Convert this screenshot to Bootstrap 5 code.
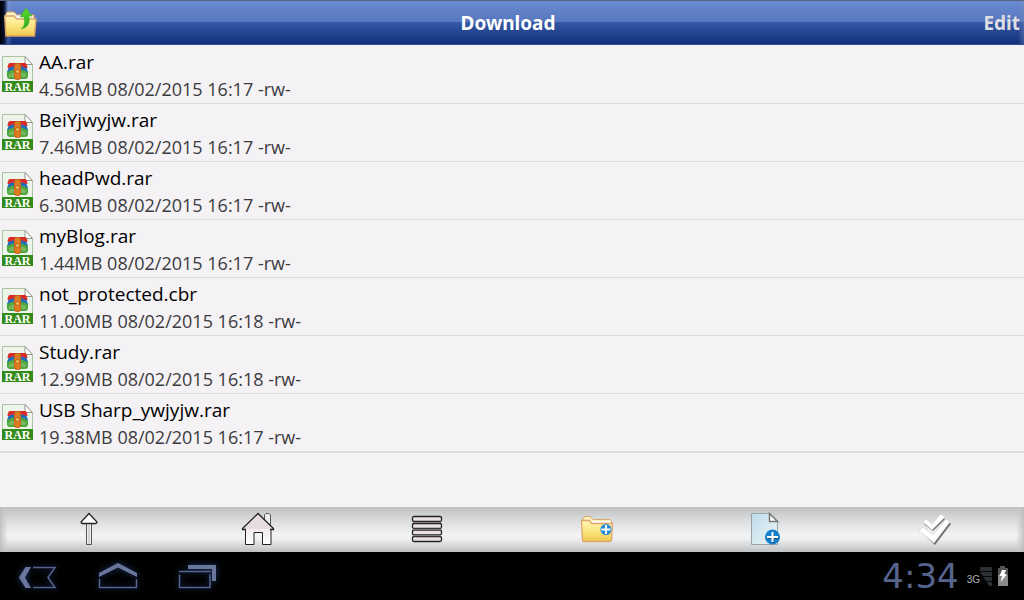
<!DOCTYPE html>
<html lang="en">
<head>
<meta charset="utf-8">
<meta name="viewport" content="width=device-width, initial-scale=1">
<title>Download</title>
<link rel="stylesheet" href="https://cdn.jsdelivr.net/npm/bootstrap@5.3.0/dist/css/bootstrap.min.css">
<style>
body { font-family: "Open Sans", "Noto Sans", sans-serif; background: #f4f2f5; color: #000; }
svg { display: block; flex: none; }
button { border: 0; background: none; padding: 0; }
.titlebar { height: 45px; border-top: 1px solid #53647f; border-bottom: 1px solid #2b5098;
  background: linear-gradient(90deg, #000 0, #06112b 4px, #8ba2d455 8px, transparent 12px, transparent calc(100% - 6px), #7890c066 100%),
  linear-gradient(#6a8ad2, #5676bd 49%, #3559a6 50%, #102f79); }
.titlebar h1, .edit-btn { font-family: "Noto Sans", sans-serif; font-size: 19px; line-height: 26px; font-weight: 700; }
.titlebar h1 { color: #fff; }
.edit-btn { color: #dedee2; }
.side { flex: 1 1 0; }
.file-list { padding-top: 1px; }
.file-row { height: 58px; padding-left: 2px; gap: 5px; border-bottom: 1px solid #dcdadd; color: #000; }
.file-row:last-child { height: 59px; border-bottom-width: 2px; }
.file-row svg { margin-top: 9px; }
.file-text { padding-top: 2px; }
.file-name { font-size: 19px; line-height: 28px; }
.file-meta { font-size: 18px; line-height: 27px; color: #3c3b3d; }
.toolbar { height: 45px; padding-bottom: 2px; background: linear-gradient(90deg, #b9b9bbcc 0, #c6c6c888 4px, transparent 8px, transparent calc(100% - 8px), #c6c6c888 calc(100% - 4px), #b9b9bbcc 100%),
  linear-gradient(#c0c1c3, #d9dadb 28%, #f3f4f5 62%, #eceeef 72%, #bfc0c1); }
.sysbar { height: 48px; background: #000; }
.sysbar button svg { filter: drop-shadow(0 0 3px #20376c); }
.clock { font-family: "DejaVu Sans", sans-serif; font-size: 34px; line-height: 40px; color: #56648c; }
.net-label { font-family: "Liberation Sans", sans-serif; font-size: 10px; line-height: 12px; color: #b0b0b0; }
</style>
</head>
<body>
<svg width="0" height="0" class="position-absolute" aria-hidden="true">
  <defs>
    <linearGradient id="gold" x2="0" y2="1"><stop stop-color="#fff6b5"/><stop offset=".55" stop-color="#fae37a"/><stop offset="1" stop-color="#efc851"/></linearGradient>
    <linearGradient id="leaf" x2="1" y2="1"><stop stop-color="#bcdcea"/><stop offset="1" stop-color="#f0f5f7"/></linearGradient>
    <linearGradient id="pale" x2="0" y2="1"><stop stop-color="#e6dadd"/><stop offset="1" stop-color="#fff"/></linearGradient>
    <linearGradient id="arrow" x2="0" y2="1"><stop stop-color="#61db2e"/><stop offset="1" stop-color="#2aa51d"/></linearGradient>
    <symbol id="rar" viewBox="0 0 32 38">
      <path d="M.5 1.500H23L30.500 9.500V36.500H.5Z" fill="#edf5eb" stroke="#a9c5a2"/>
      <path d="M23 1.500V9.500H30.500Z" fill="#fff" stroke="#8f9b8d"/>
      <path d="M8 8H23Q25 8 25.500 13H5.500Q6 8 8 8Z" fill="#d92c25"/>
      <path d="M6.500 13Q15 9 24.500 13L26 17H5Z" fill="#226ac0"/>
      <path d="M5 17Q15 11 26 17L26 21Q26 24 23 24H8Q5 24 5 21Z" fill="#4ba642"/>
      <path d="M7 19Q15 15 24 19V22H7Z" fill="#78b75a"/>
      <rect x="12.500" y="8.500" width="6" height="16" rx="2" fill="#dc7b20" stroke="#c4661a"/>
      <circle cx="15.500" cy="16.500" r="2" fill="#f5bd56" stroke="#b8611f"/>
      <rect y="26" width="31" height="11" fill="#348a19"/>
      <text x="15.500" y="35.500" text-anchor="middle" font-family="Liberation Serif, serif" font-size="12" font-weight="700" fill="#fff">RAR</text>
    </symbol>
  </defs>
</svg>
<div class="d-flex flex-column min-vh-100">
  <header class="titlebar d-flex align-items-center px-1">
    <div class="side">
      <button type="button" class="d-block" aria-label="Parent folder">
        <svg width="33" height="32" viewBox="0 0 33 32">
          <path d="M1 9 3 5H10L13 8H30V15H2Z" fill="#fff4c7" stroke="#dca25f"/>
          <path d="M6 9 27 8V15H6Z" fill="#fafafa" stroke="#ddd"/>
          <path d="M.7 9H10L13 12H32L30.500 29H2Z" fill="url(#gold)" stroke="#dfa465" stroke-width="1.500"/>
          <path d="M17 22Q22 19 20 10H16L22 1 28 9H25Q27 20 17 22Z" fill="url(#arrow)" stroke="#36b425" stroke-width=".5"/>
        </svg>
      </button>
    </div>
    <h1 class="my-0 ms-0 me-2">Download</h1>
    <div class="side text-end"><button type="button" class="edit-btn">Edit</button></div>
  </header>

  <main class="flex-grow-1">
    <div class="file-list d-flex flex-column">
      <a href="#" class="file-row d-flex text-decoration-none"><svg width="32" height="38"><use href="#rar"/></svg><span class="file-text d-flex flex-column"><span class="file-name">AA.rar</span><span class="file-meta">4.56MB 08/02/2015 16:17 -rw-</span></span></a>
      <a href="#" class="file-row d-flex text-decoration-none"><svg width="32" height="38"><use href="#rar"/></svg><span class="file-text d-flex flex-column"><span class="file-name">BeiYjwyjw.rar</span><span class="file-meta">7.46MB 08/02/2015 16:17 -rw-</span></span></a>
      <a href="#" class="file-row d-flex text-decoration-none"><svg width="32" height="38"><use href="#rar"/></svg><span class="file-text d-flex flex-column"><span class="file-name">headPwd.rar</span><span class="file-meta">6.30MB 08/02/2015 16:17 -rw-</span></span></a>
      <a href="#" class="file-row d-flex text-decoration-none"><svg width="32" height="38"><use href="#rar"/></svg><span class="file-text d-flex flex-column"><span class="file-name">myBlog.rar</span><span class="file-meta">1.44MB 08/02/2015 16:17 -rw-</span></span></a>
      <a href="#" class="file-row d-flex text-decoration-none"><svg width="32" height="38"><use href="#rar"/></svg><span class="file-text d-flex flex-column"><span class="file-name">not_protected.cbr</span><span class="file-meta">11.00MB 08/02/2015 16:18 -rw-</span></span></a>
      <a href="#" class="file-row d-flex text-decoration-none"><svg width="32" height="38"><use href="#rar"/></svg><span class="file-text d-flex flex-column"><span class="file-name">Study.rar</span><span class="file-meta">12.99MB 08/02/2015 16:18 -rw-</span></span></a>
      <a href="#" class="file-row d-flex text-decoration-none"><svg width="32" height="38"><use href="#rar"/></svg><span class="file-text d-flex flex-column"><span class="file-name">USB Sharp_ywjyjw.rar</span><span class="file-meta">19.38MB 08/02/2015 16:17 -rw-</span></span></a>
    </div>
  </main>

  <nav class="toolbar d-flex align-items-center px-1" aria-label="File actions">
    <button type="button" class="col d-flex justify-content-center" aria-label="Up">
      <svg width="34" height="34" viewBox="0 0 34 34"><path d="M14.500 11V32.500H19.500V11" fill="#eee" stroke="#555"/><path d="M17 1.500 25 10 24 11.500H10L9 10Z" fill="#fff" stroke="#222" stroke-width="1.300"/><path d="M17 12V32" stroke="#bbb"/></svg>
    </button>
    <button type="button" class="col d-flex justify-content-center" aria-label="Home">
      <svg width="34" height="34" viewBox="0 0 34 34"><path d="M23.500 9V3L25 1.500H28L29.500 3V15" fill="#eee" stroke="#555"/><path d="M4.500 17V32.500H13V20.500H21.500V32.500H30V17L17 4Z" fill="url(#pale)" stroke="#222"/><path d="M17 1.500 32.500 17 31 18 28 17H6L2 18 1.500 16.500Z" fill="#e7dcdf"/><path d="M5 17.500H1.500V16.500L17 1.500 32.500 16.500V17.500H29" fill="none" stroke="#222" stroke-width="1.300"/></svg>
    </button>
    <button type="button" class="col d-flex justify-content-center" aria-label="List view">
      <svg width="34" height="34" viewBox="0 0 34 34"><g fill="#ebe2e4" stroke="#222" stroke-width="1.300"><rect x="2.500" y="4.500" width="29" height="5" rx="1.500"/><rect x="2.500" y="11.500" width="29" height="5" rx="1.500"/><rect x="2.500" y="18" width="29" height="5" rx="1.500"/><rect x="2.500" y="24.500" width="29" height="5" rx="1.500"/></g><path d="M3 10.500H31M3 17.300H31M3 23.700H31" stroke="#888"/></svg>
    </button>
    <button type="button" class="col d-flex justify-content-center" aria-label="New folder">
      <svg width="34" height="34" viewBox="0 0 34 34"><path d="M3 9V6L5 4.500H10L13 7.500H30L31.500 9V14H3Z" fill="#fdf1b8" stroke="#dca76e"/><path d="M11 9H31V12H11Z" fill="#fafafa"/><path d="M1.500 8.500H9L12 11.500H32.500L31.500 28Q31 29.500 29.500 29.500H4Q2.500 29.500 2.500 28Z" fill="url(#gold)" stroke="#dda46b" stroke-width="1.300"/><circle cx="26" cy="17.500" r="5.500" fill="#268bdc"/><path d="M26 13V22M21.500 17.500H30.500" stroke="#fff" stroke-width="2"/></svg>
    </button>
    <button type="button" class="col d-flex justify-content-center" aria-label="New file">
      <svg width="34" height="34" viewBox="0 0 34 34"><path d="M2.500 1.500H20.500L28.500 9.500V32.500H2.500Z" fill="url(#leaf)" stroke="#97a3aa"/><path d="M20.500 1.500V9.500H28.500Z" fill="#fff" stroke="#777" stroke-width="1.500"/><circle cx="23.500" cy="25" r="7.500" fill="#147fcb"/><path d="M24 20.500V31M18.500 26H29.500" stroke="#244d70" stroke-width="2"/><path d="M23.500 20V30M18 25H29" stroke="#fff" stroke-width="2"/></svg>
    </button>
    <button type="button" class="col d-flex justify-content-center" aria-label="Select all">
      <svg width="34" height="34" viewBox="0 0 34 34"><g fill="#6f6f6f"><path d="M3 20 6 17 17 26 30 9 33 12 17 33Z"/><path d="M6 12 9 9 14 14 24 5 27 7 15 19Z"/></g><g fill="#fff" stroke="#c4c4c4" stroke-width=".5"><path d="M1 19 5 15 15 23 28 7 32 10 16 31Z"/><path d="M5 10 8 7 14 12 23 2 27 5 14 18Z"/></g></svg>
    </button>
  </nav>

  <footer class="sysbar d-flex align-items-center justify-content-between ps-3 pe-3">
    <div class="d-flex pt-1">
      <button type="button" class="me-4" aria-label="Back"><svg width="56" height="32" viewBox="0 0 56 32"><path d="M9.500 5H15L9 15.500 15 26H9.500L3 15.500Z" fill="#69779d"/><path d="M17 5.500H39L32 15.500 39 25.500H17" fill="none" stroke="#53628a" stroke-width="1.500"/></svg></button>
      <button type="button" class="me-4" aria-label="Home screen"><svg width="56" height="32" viewBox="0 0 56 32"><path d="M3 11 22 1 41 11V15L22 5.500 3 15Z" fill="#69779d"/><path d="M3.500 17V25.500H40.500V17" fill="none" stroke="#56658e" stroke-width="1.500"/></svg></button>
      <button type="button" aria-label="Recent apps"><svg width="56" height="32" viewBox="0 0 56 32"><path d="M12 3H40V19H36V7H12Z" fill="#69779d"/><path d="M3.500 12.500V25.500H34V12.500M2.800 9.500H34.800" fill="none" stroke="#56658e" stroke-width="1.500"/></svg></button>
    </div>
    <div class="d-flex align-items-center">
      <time class="clock me-2" datetime="16:34">4:34</time>
      <span class="net-label pt-2">3G</span>
      <svg width="28" height="24" viewBox="0 0 28 24" aria-hidden="true"><path d="M-3 3H12V22H9Z" fill="#2b2e32"/><path d="M-3 7.500H12M0 12.500H12M3 17.500H12" stroke="#07080a"/><path d="M20 2H25V4H28V22H18V4H20Z" fill="#555"/><path d="M18 11H28V22H18Z" fill="#898989"/><path d="M22 6H26L24.500 10H27L21 18 22 12H19.500Z" fill="#fff"/></svg>
    </div>
  </footer>
</div>
<script src="https://cdn.jsdelivr.net/npm/bootstrap@5.3.0/dist/js/bootstrap.bundle.min.js"></script>
</body>
</html>
